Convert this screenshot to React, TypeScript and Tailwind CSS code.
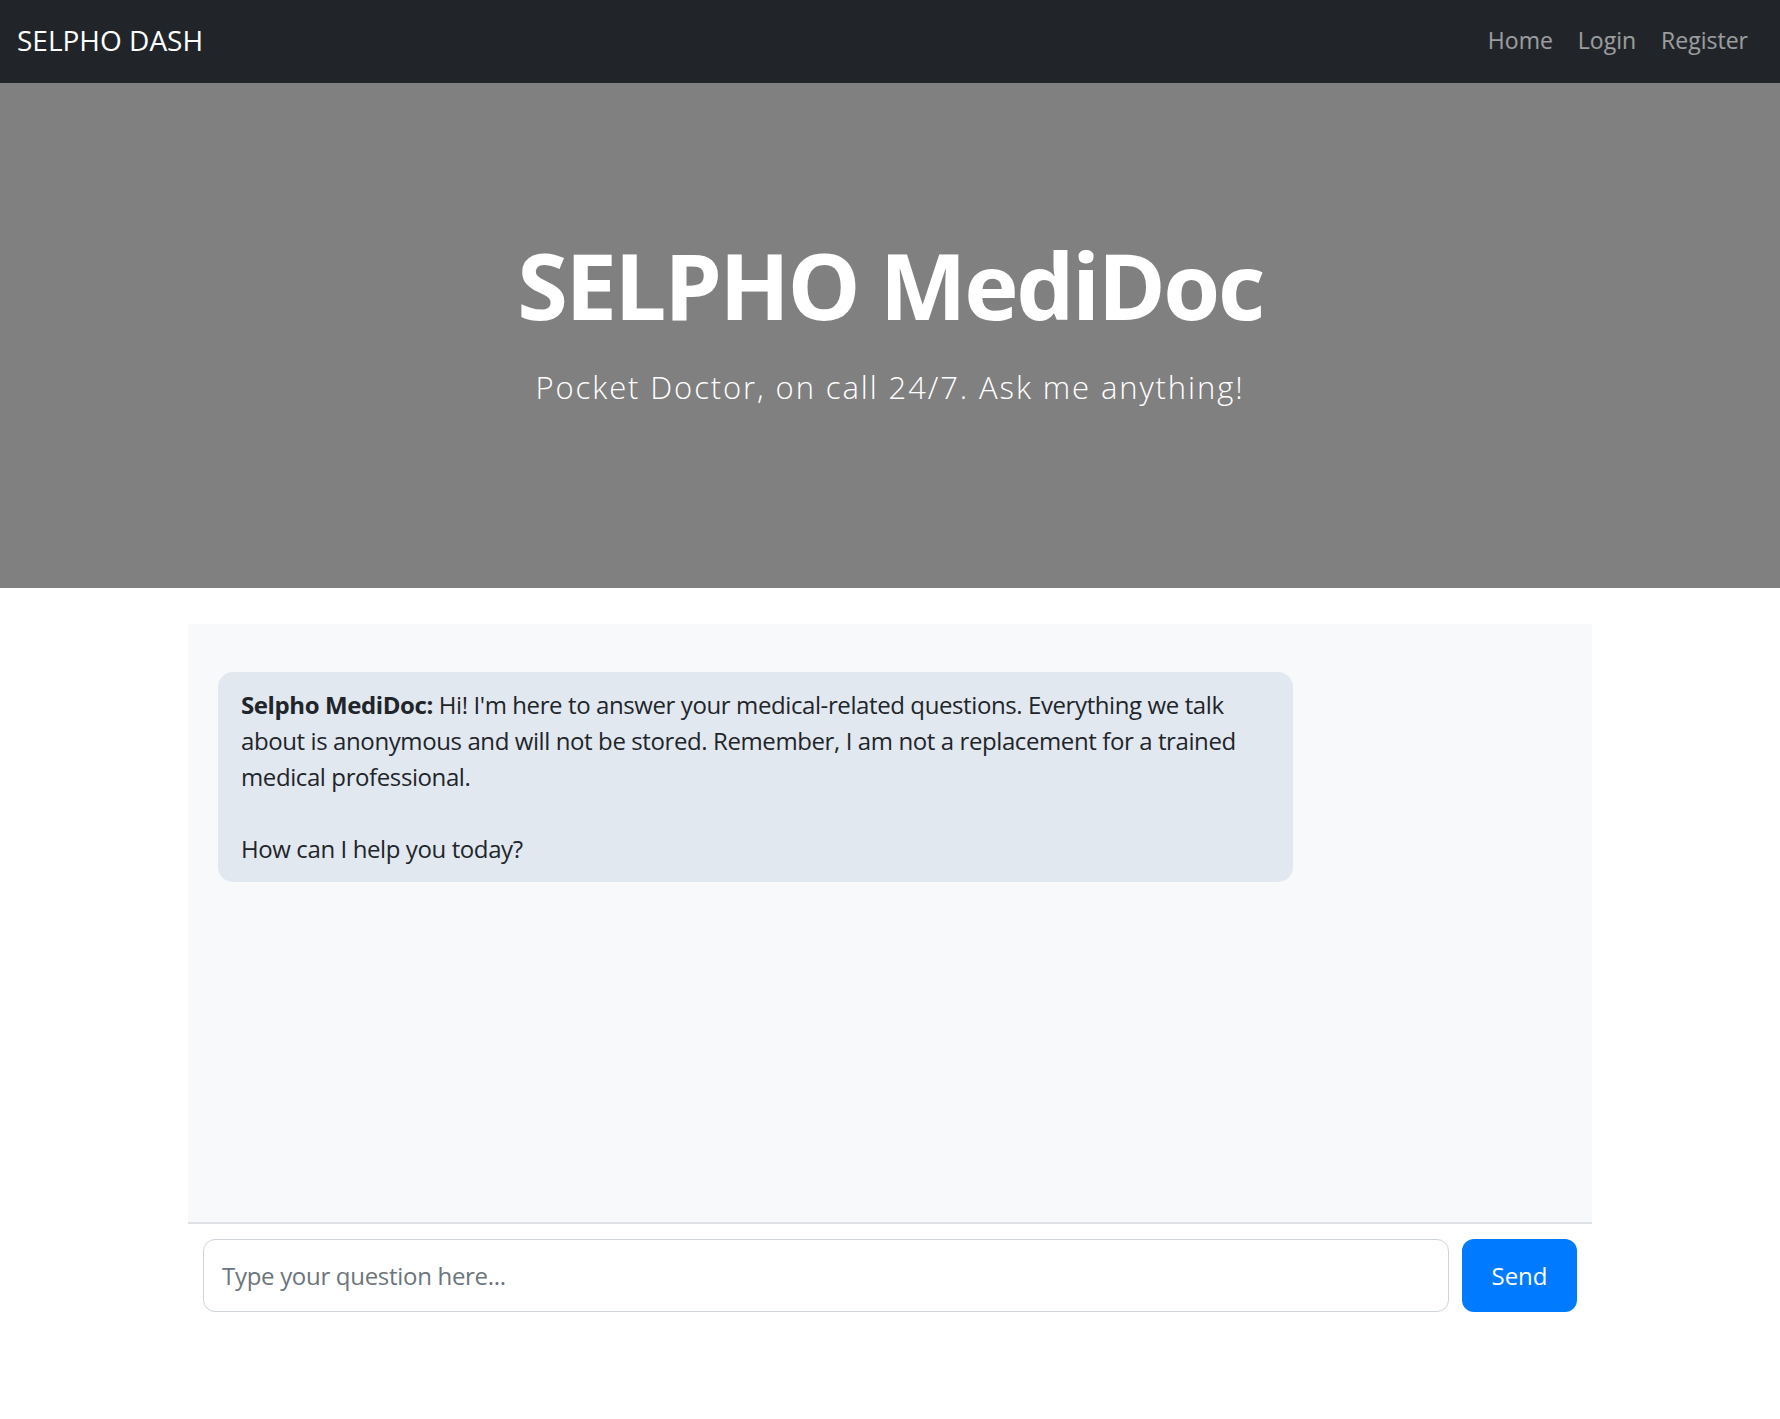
export default function App() {
  const font = { fontFamily: '"Open Sans", "Liberation Sans", sans-serif' };
  return (
    <div className="min-h-screen bg-white text-[#212529]" style={font}>
      {/* Navbar */}
      <nav className="h-[83px] bg-[#212529] flex items-center justify-between px-[17px] pb-[3px]">
        <span className="text-[28px] text-white leading-none">SELPHO DASH</span>
        <div className="flex items-center gap-[25px] pr-[15px] text-[23px] text-white/55">
          <a href="#">Home</a>
          <a href="#">Login</a>
          <a href="#">Register</a>
        </div>
      </nav>

      {/* Hero */}
      <header className="h-[505px] bg-[#808080] flex flex-col items-center pt-[147px] text-white">
        <h1 className="text-[92px] font-bold leading-[1.2] tracking-[-2.4px]">SELPHO MediDoc</h1>
        <p className="text-[31px] font-light tracking-[1.9px] mt-[24px]">
          Pocket Doctor, on call 24/7. Ask me anything!
        </p>
      </header>

      {/* Chat */}
      <main className="w-[1404px] mx-auto mt-[36px]">
        <div className="h-[600px] bg-[#f8f9fa] border-b-2 border-[#dee2e6] p-[30px] pt-[48px]">
          <div className="max-w-[80%] bg-[#e2e8f0] rounded-[15px] px-[23px] py-[15px] text-[24px] leading-[36px] tracking-[-0.4px]">
            <p>
              <strong className="font-bold">Selpho MediDoc:</strong> Hi! I'm here to answer your medical-related
              questions. Everything we talk about is anonymous and will not be stored. Remember, I am not a
              replacement for a trained medical professional.
            </p>
            <br />
            <p>How can I help you today?</p>
          </div>
        </div>
        <div className="flex gap-[13px] p-[15px]">
          <input
            type="text"
            placeholder="Type your question here..."
            className="flex-1 h-[73px] rounded-[12px] border-[1.5px] border-[#ced4da] px-[18px] text-[24px] tracking-[-0.3px] placeholder:text-[#6c757d] outline-none"
          />
          <button className="h-[73px] w-[115px] rounded-[12px] bg-[#007bff] text-white text-[24px]">Send</button>
        </div>
      </main>
    </div>
  );
}
